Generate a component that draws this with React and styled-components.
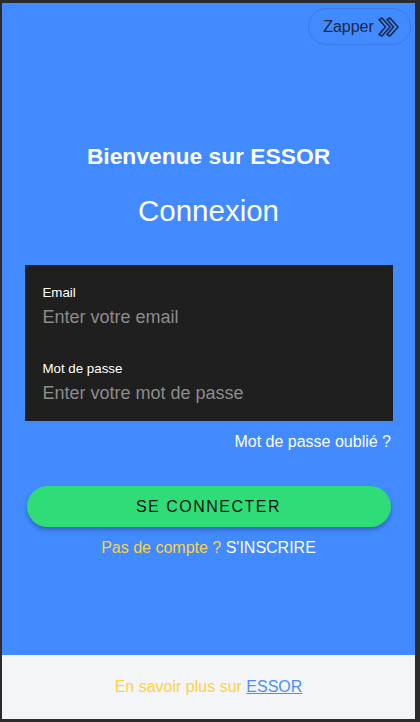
import styled, { createGlobalStyle } from "styled-components"

const GlobalStyle = createGlobalStyle`
    html, body {
        margin: 0;
        padding: 0;
        background: #2b2b2b;
        font-family: "Liberation Sans", Arial, sans-serif;
    }
    * {
        box-sizing: border-box;
    }
`

const DoubleChevron = () => (
    <svg width="23" height="20" viewBox="0 0 23 20" fill="none">
        <path d="M2 2.5 L5 1 L13 10 L5 19 L2 17.5 L8.5 10 Z" stroke="#1b2846" strokeWidth="1.6" strokeLinejoin="round" />
        <path d="M10 2.5 L13 1 L21 10 L13 19 L10 17.5 L16.5 10 Z" stroke="#1b2846" strokeWidth="1.6" strokeLinejoin="round" />
    </svg>
)

const App = () => {
    return (
        <>
            <GlobalStyle />
            <Frame>
                <Main>
                    <TopBar>
                        <ZapButton>
                            Zapper
                            <DoubleChevron />
                        </ZapButton>
                    </TopBar>
                    <Welcome>Bienvenue sur ESSOR</Welcome>
                    <Title>Connexion</Title>
                    <Form>
                        <Field $first>
                            <Label>Email</Label>
                            <Input type="email" placeholder="Enter votre email" />
                        </Field>
                        <Field>
                            <Label>Mot de passe</Label>
                            <Input type="password" placeholder="Enter votre mot de passe" />
                        </Field>
                    </Form>
                    <Forgot>Mot de passe oublié ?</Forgot>
                    <SubmitButton>SE CONNECTER</SubmitButton>
                    <SignUp>
                        <Yellow>Pas de compte ? </Yellow>S'INSCRIRE
                    </SignUp>
                </Main>
                <Footer>
                    <Yellow>En savoir plus sur </Yellow>
                    <FooterLink href="#">ESSOR</FooterLink>
                </Footer>
            </Frame>
        </>
    )
}

const Frame = styled.div`
    margin: 3px 5px 3px 2px;
    height: 716px;
    display: flex;
    flex-direction: column;
`

const Main = styled.main`
    background: #418aff;
    height: 652px;
    display: flex;
    flex-direction: column;
    align-items: center;
    color: #fff;
`

const TopBar = styled.div`
    width: 100%;
    display: flex;
    justify-content: flex-end;
    padding: 5px 4px 0 0;
`

const ZapButton = styled.button`
    width: 103px;
    height: 37px;
    border-radius: 19px;
    border: 1px solid #3a7be6;
    background: transparent;
    color: #1b2846;
    font-family: "Liberation Sans", Arial, sans-serif;
    font-size: 16px;
    display: flex;
    align-items: center;
    justify-content: center;
    gap: 3px;
    padding: 0 0 0 4px;
`

const Welcome = styled.h2`
    margin: 100px 0 0;
    font-size: 22.8px;
    line-height: 23px;
    font-weight: bold;
`

const Title = styled.h1`
    margin: 27px 0 0;
    font-size: 29.5px;
    line-height: 32px;
    font-weight: normal;
`

const Form = styled.div`
    margin-top: 38px;
    width: 368px;
    background: #1f1f1f;
    display: flex;
    flex-direction: column;
`

const Field = styled.label`
    height: 78px;
    padding: ${p => (p.$first ? "20px" : "18px")} 18px 0;
    display: flex;
    flex-direction: column;
    gap: 7px;
`

const Label = styled.span`
    font-size: 13.3px;
    line-height: 15px;
    color: #fff;
`

const Input = styled.input`
    background: transparent;
    border: none;
    outline: none;
    padding: 0;
    height: 21px;
    font-family: "Liberation Sans", Arial, sans-serif;
    font-size: 18px;
    color: #fff;
    &::placeholder {
        color: #8c8c8c;
    }
`

const Forgot = styled.a`
    align-self: flex-end;
    margin: 12px 24px 0 0;
    font-size: 16px;
    line-height: 18px;
    color: #fff;
`

const SubmitButton = styled.button`
    margin-top: 35px;
    width: 364px;
    height: 41px;
    border: none;
    border-radius: 21px;
    background: #2edd78;
    color: #111;
    font-family: "Liberation Sans", Arial, sans-serif;
    font-size: 16px;
    letter-spacing: 1.5px;
    box-shadow: 0 3px 4px rgba(0, 0, 0, 0.25);
`

const SignUp = styled.p`
    margin: 12px 0 0;
    font-size: 16px;
    line-height: 18px;
    color: #fff;
`

const Yellow = styled.span`
    color: #fdd240;
`

const Footer = styled.footer`
    height: 64px;
    background: #f4f5f9;
    display: flex;
    align-items: center;
    justify-content: center;
    font-size: 16px;
    white-space: pre;
`

const FooterLink = styled.a`
    color: #4a8ff6;
    text-decoration: underline;
`

export default App
